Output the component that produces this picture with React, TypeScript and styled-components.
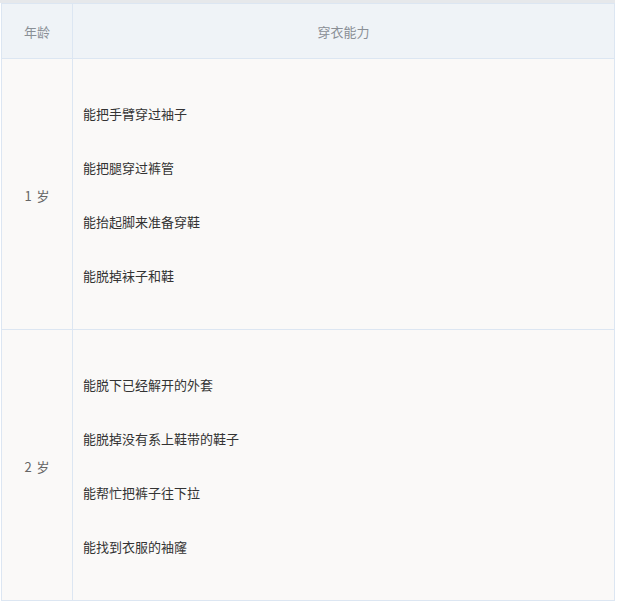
import React from 'react';
import styled, { createGlobalStyle } from 'styled-components';

interface AgeGroup {
  age: number
  skills: string[]
}

const groups: AgeGroup[] = [
  {
    age: 1,
    skills: ['能把手臂穿过袖子', '能把腿穿过裤管', '能抬起脚来准备穿鞋', '能脱掉袜子和鞋'],
  },
  {
    age: 2,
    skills: ['能脱下已经解开的外套', '能脱掉没有系上鞋带的鞋子', '能帮忙把裤子往下拉', '能找到衣服的袖窿'],
  },
];

const GlobalStyle = createGlobalStyle`
  body {
    margin: 0;
    background: #fff;
    font-family: "Microsoft YaHei", "Noto Sans CJK SC", "Noto Sans", sans-serif;
  }
`;

const Wrapper = styled.div`
  width: 615px;
  border-top: 3px solid #e6e8eb;
`;

const Table = styled.table`
  margin-left: 1px;
  width: 614px;
  border-collapse: separate;
  border-spacing: 0;
  border-top: 1px solid #dce6f2;
  border-left: 1px solid #dce6f2;
  table-layout: fixed;
  font-size: 13px;
`;

const HeadCell = styled.th<{ $w?: number }>`
  width: ${p => (p.$w ? `${p.$w}px` : 'auto')};
  height: 54px;
  padding: 0;
  background: #eff3f7;
  color: #8a8f96;
  font-weight: normal;
  text-align: center;
  border-right: 1px solid #dce6f2;
  border-bottom: 1px solid #dce6f2;
  box-sizing: content-box;
`;

const AgeCell = styled.td`
  padding: 2px 0 0;
  background: #faf9f8;
  color: #666;
  text-align: center;
  vertical-align: middle;
  border-right: 1px solid #dce6f2;
  border-bottom: 1px solid #dce6f2;
`;

const Unit = styled.span`
  margin-left: 5px;
`;

const SkillCell = styled.td`
  padding: 28px 10px 26px;
  background: #faf9f8;
  color: #333;
  vertical-align: top;
  border-right: 1px solid #dce6f2;
  border-bottom: 1px solid #dce6f2;
`;

const Skill = styled.p`
  margin: 0;
  height: 54px;
  display: flex;
  align-items: center;
  line-height: 20px;
`;

const App: React.FC = () => {
  return (
    <Wrapper>
      <GlobalStyle />
      <Table>
        <thead>
          <tr>
            <HeadCell $w={70}>年龄</HeadCell>
            <HeadCell>穿衣能力</HeadCell>
          </tr>
        </thead>
        <tbody>
          {groups.map(g => (
            <tr key={g.age}>
              <AgeCell>
                {g.age}
                <Unit>岁</Unit>
              </AgeCell>
              <SkillCell>
                {g.skills.map(s => (
                  <Skill key={s}>{s}</Skill>
                ))}
              </SkillCell>
            </tr>
          ))}
        </tbody>
      </Table>
    </Wrapper>
  );
};

export default App;
